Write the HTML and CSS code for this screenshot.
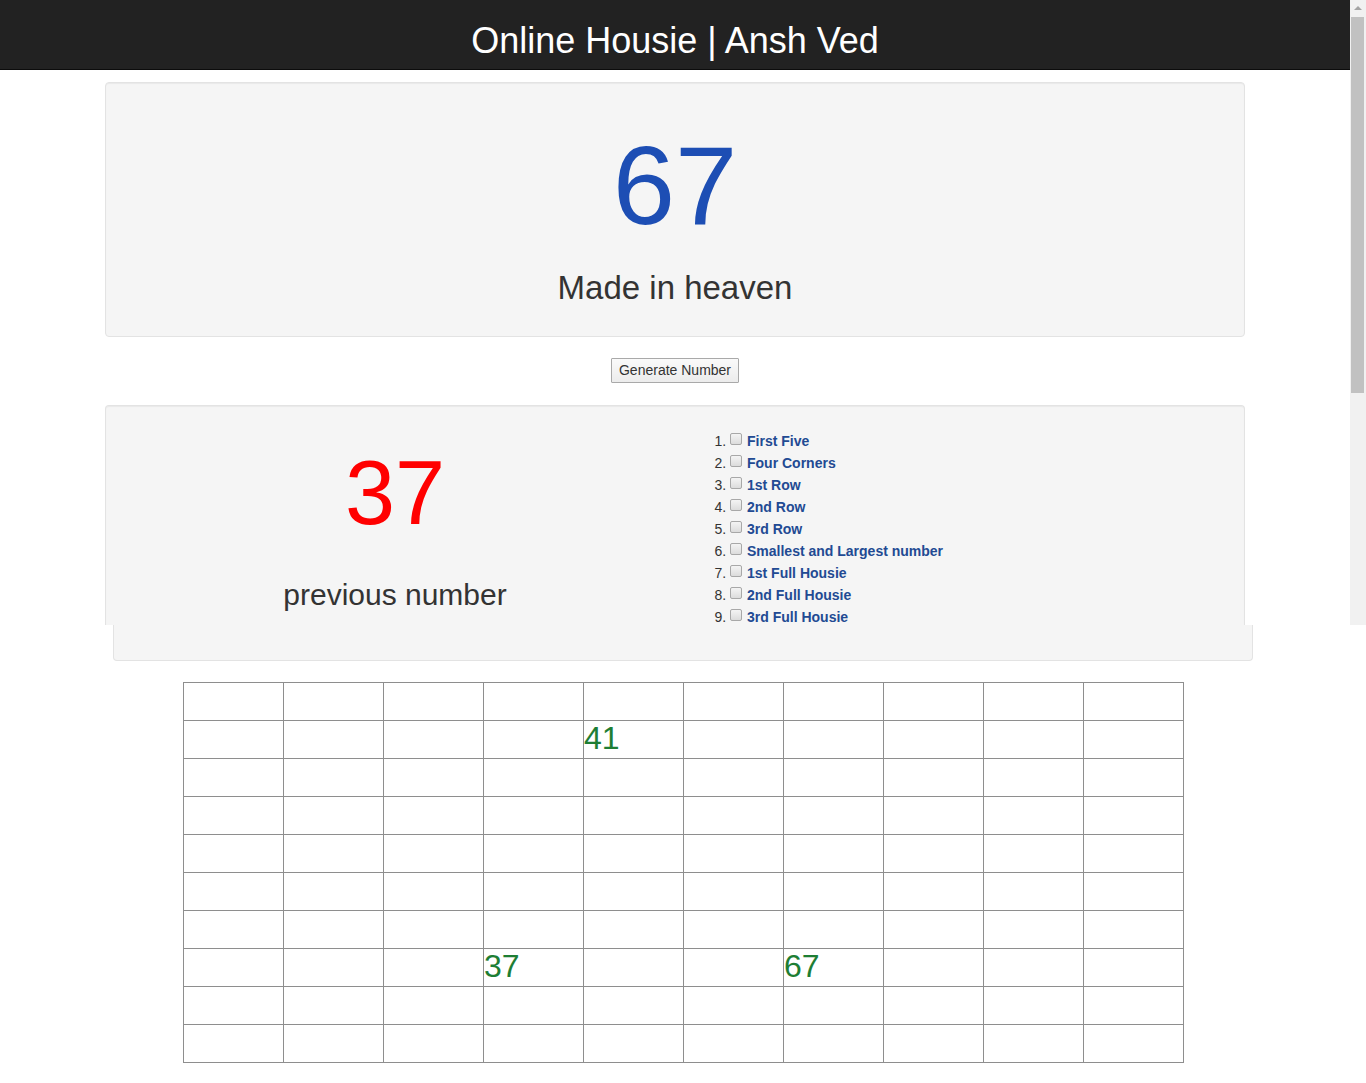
FILE: index.html
```html
<!DOCTYPE html>
<html lang="en">
<head>
<meta charset="utf-8">
<title>Online Housie | Ansh Ved</title>
<link rel="stylesheet" href="styles.css">
</head>
<body>
<div class="page">
  <header class="topbar">
    <h1 class="title">Online Housie | Ansh Ved</h1>
  </header>
  <main class="container">
    <section class="well well-current">
      <div class="current-number">67</div>
      <div class="current-phrase">Made in heaven</div>
    </section>
    <div class="actions">
      <button class="btn" type="button">Generate Number</button>
    </div>
    <section class="well well-split">
      <div class="prev-col">
        <div class="prev-number">37</div>
        <h2 class="prev-label">previous number</h2>
      </div>
      <div class="prize-col">
        <ol class="prizes">
          <li><input type="checkbox" class="chk"><label class="prize">First Five</label></li>
          <li><input type="checkbox" class="chk"><label class="prize">Four Corners</label></li>
          <li><input type="checkbox" class="chk"><label class="prize">1st Row</label></li>
          <li><input type="checkbox" class="chk"><label class="prize">2nd Row</label></li>
          <li><input type="checkbox" class="chk"><label class="prize">3rd Row</label></li>
          <li><input type="checkbox" class="chk"><label class="prize">Smallest and Largest number</label></li>
          <li><input type="checkbox" class="chk"><label class="prize">1st Full Housie</label></li>
          <li><input type="checkbox" class="chk"><label class="prize">2nd Full Housie</label></li>
          <li><input type="checkbox" class="chk"><label class="prize">3rd Full Housie</label></li>
        </ol>
      </div>
    </section>
  </main>
  <div class="lower">
    <div class="container">
      <div class="well-tail"></div>
    </div>
    <div class="board">
      <div class="cell"></div><div class="cell"></div><div class="cell"></div><div class="cell"></div><div class="cell"></div><div class="cell"></div><div class="cell"></div><div class="cell"></div><div class="cell"></div><div class="cell"></div>
      <div class="cell"></div><div class="cell"></div><div class="cell"></div><div class="cell"></div><div class="cell">41</div><div class="cell"></div><div class="cell"></div><div class="cell"></div><div class="cell"></div><div class="cell"></div>
      <div class="cell"></div><div class="cell"></div><div class="cell"></div><div class="cell"></div><div class="cell"></div><div class="cell"></div><div class="cell"></div><div class="cell"></div><div class="cell"></div><div class="cell"></div>
      <div class="cell"></div><div class="cell"></div><div class="cell"></div><div class="cell"></div><div class="cell"></div><div class="cell"></div><div class="cell"></div><div class="cell"></div><div class="cell"></div><div class="cell"></div>
      <div class="cell"></div><div class="cell"></div><div class="cell"></div><div class="cell"></div><div class="cell"></div><div class="cell"></div><div class="cell"></div><div class="cell"></div><div class="cell"></div><div class="cell"></div>
      <div class="cell"></div><div class="cell"></div><div class="cell"></div><div class="cell"></div><div class="cell"></div><div class="cell"></div><div class="cell"></div><div class="cell"></div><div class="cell"></div><div class="cell"></div>
      <div class="cell"></div><div class="cell"></div><div class="cell"></div><div class="cell"></div><div class="cell"></div><div class="cell"></div><div class="cell"></div><div class="cell"></div><div class="cell"></div><div class="cell"></div>
      <div class="cell"></div><div class="cell"></div><div class="cell"></div><div class="cell">37</div><div class="cell"></div><div class="cell"></div><div class="cell">67</div><div class="cell"></div><div class="cell"></div><div class="cell"></div>
      <div class="cell"></div><div class="cell"></div><div class="cell"></div><div class="cell"></div><div class="cell"></div><div class="cell"></div><div class="cell"></div><div class="cell"></div><div class="cell"></div><div class="cell"></div>
      <div class="cell"></div><div class="cell"></div><div class="cell"></div><div class="cell"></div><div class="cell"></div><div class="cell"></div><div class="cell"></div><div class="cell"></div><div class="cell"></div><div class="cell"></div>
    </div>
  </div>
  <div class="fake-scrollbar" aria-hidden="true">
    <div class="sb-arrow"></div>
    <div class="sb-thumb"></div>
  </div>
</div>
</body>
</html>
```

FILE: styles.css
```css
* { box-sizing: border-box; }

html, body {
  margin: 0;
  padding: 0;
  background: #fff;
  overflow: hidden;
}

body {
  font-family: "Liberation Sans", Arial, Helvetica, sans-serif;
  color: #333;
  font-size: 14px;
}

.page {
  position: relative;
  width: 1366px;
  height: 1083px;
}

.topbar {
  width: 1350px;
  background: #222;
  border-bottom: 1px solid #0c0c0c;
  padding: 21px 0 8px;
}

.title {
  margin: 0;
  font-size: 36px;
  line-height: 40px;
  font-weight: normal;
  color: #fff;
  text-align: center;
}

.container {
  width: 1140px;
  margin: 0 auto 0 105px;
}

.well {
  background: #f5f5f5;
  border: 1px solid #e3e3e3;
  border-radius: 4px;
  box-shadow: inset 0 1px 1px rgba(0, 0, 0, 0.05);
}

.well-current {
  margin-top: 12px;
  height: 255px;
  padding-top: 47px;
  text-align: center;
}

.current-number {
  font-size: 112px;
  line-height: 112px;
  color: #1d4eb4;
}

.current-phrase {
  margin-top: 28px;
  font-size: 33px;
  line-height: 36px;
  color: #333;
}

.actions {
  display: flex;
  justify-content: center;
  padding: 21px 0 22px;
}

.btn {
  font-family: "Liberation Sans", Arial, sans-serif;
  font-size: 14px;
  line-height: 17px;
  height: 25px;
  padding: 3px 7px;
  color: #333;
  background: linear-gradient(#fafafa, #ececec);
  border: 1px solid #a9a9a9;
  border-radius: 1px;
}

.well-split {
  display: flex;
  height: 220px;
  overflow: hidden;
  border-bottom: none;
  border-radius: 4px 4px 0 0;
  padding-left: 19px;
}

.prev-col {
  width: 540px;
  text-align: center;
  padding-top: 42px;
}

.prev-number {
  font-size: 90px;
  line-height: 90px;
  color: #ff0000;
}

.prev-label {
  margin: 40px 0 0;
  font-size: 30px;
  line-height: 33px;
  font-weight: normal;
  color: #333;
}

.prize-col {
  flex: 1;
  padding-top: 24px;
}

.prizes {
  margin: 0;
  padding-left: 65px;
  font-size: 14px;
  line-height: 22px;
  color: #333;
}

.chk {
  -webkit-appearance: none;
  appearance: none;
  display: inline-block;
  vertical-align: top;
  width: 12px;
  height: 12px;
  margin: 3px 5px 0 0;
  border: 1px solid #a8a8a8;
  border-radius: 2px;
  background: linear-gradient(#f4f4f4, #dcdcdc);
}

.prize {
  font-weight: bold;
  color: #224a93;
}

.lower {
  margin-left: 8px;
}

.well-tail {
  height: 36px;
  background: #f5f5f5;
  border: 1px solid #e3e3e3;
  border-top: none;
  border-radius: 0 0 4px 4px;
}

.board {
  display: grid;
  grid-template-columns: repeat(10, 100px);
  grid-auto-rows: 38px;
  width: 1001px;
  margin: 21px 0 0 175px;
  border-top: 1px solid #8e8e8e;
  border-left: 1px solid #8e8e8e;
}

.cell {
  border-right: 1px solid #8e8e8e;
  border-bottom: 1px solid #8e8e8e;
  font-size: 32px;
  line-height: 35px;
  color: #1e7e34;
}

.fake-scrollbar {
  position: absolute;
  top: 0;
  left: 1350px;
  width: 16px;
  height: 625px;
  background: #f1f1f1;
}

.sb-arrow {
  position: absolute;
  top: 6px;
  left: 4px;
  width: 0;
  height: 0;
  border-left: 4px solid transparent;
  border-right: 4px solid transparent;
  border-bottom: 4px solid #a3a3a3;
}

.sb-thumb {
  position: absolute;
  top: 17px;
  left: 1px;
  width: 13px;
  height: 376px;
  background: #c1c1c1;
}
```
